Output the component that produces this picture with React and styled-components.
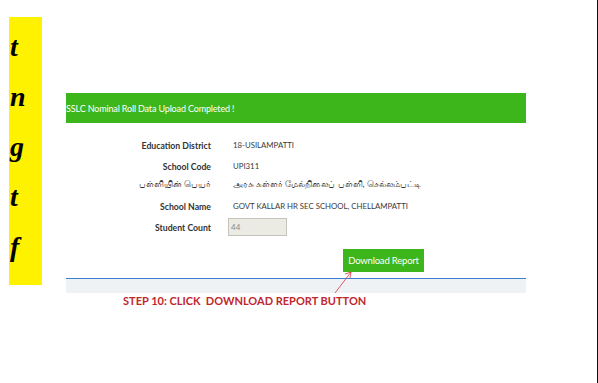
import styled, { createGlobalStyle } from "styled-components";

const GlobalStyle = createGlobalStyle`
  html, body {
    margin: 0;
    padding: 0;
    background: #ffffff;
  }
`;

const Page = styled.div`
  display: flex;
  width: 598px;
  height: 383px;
  box-sizing: border-box;
  border-right: 1px solid #111;
  overflow: hidden;
  font-family: "Lato", "Open Sans", "Liberation Sans", sans-serif;
`;

const SideStrip = styled.div`
  display: flex;
  flex-direction: column;
  gap: 18px;
  width: 33px;
  height: 268px;
  margin: 17px 0 0 9px;
  padding: 14px 0 0 1px;
  box-sizing: border-box;
  background: #fff200;
`;

const StripLetter = styled.span`
  font-family: "Liberation Serif", "DejaVu Serif", serif;
  font-weight: 700;
  font-style: italic;
  font-size: 28px;
  line-height: 32px;
  color: #000;
`;

const Main = styled.div`
  position: relative;
  width: 460px;
  margin: 93px 0 0 24px;
`;

const Banner = styled.div`
  display: flex;
  align-items: center;
  height: 30px;
  background: #3db61b;
  color: #fff;
  font-size: 9px;
  letter-spacing: -0.15px;
  white-space: nowrap;
  overflow: hidden;
`;

const Form = styled.div`
  display: flex;
  flex-direction: column;
  margin-top: 13px;
`;

const Row = styled.div`
  display: grid;
  grid-template-columns: 145px 1fr;
  column-gap: ${(p) => (p.$input ? "17px" : "22px")};
  align-items: center;
  height: 18px;
  margin-top: ${(p) => p.$top || 0}px;
`;

const Label = styled.div`
  text-align: right;
  font-size: ${(p) => (p.$tamil ? "8.5px" : "8.7px")};
  font-weight: ${(p) => (p.$tamil ? 400 : 700)};
  color: #333;
  white-space: nowrap;
`;

const Value = styled.div`
  font-size: ${(p) => (p.$tamil ? "8.5px" : "7.8px")};
  color: #3a3a3a;
  white-space: nowrap;
`;

const CountBox = styled.div`
  width: 59px;
  height: 18px;
  box-sizing: border-box;
  padding-left: 2px;
  border: 1px solid #c4c4bc;
  background: #ebebe4;
  color: #8a8a8a;
  font-size: 8px;
  line-height: 16px;
`;

const DownloadButton = styled.button`
  display: block;
  width: 81px;
  height: 23px;
  margin: 13px 0 0 277px;
  padding: 0;
  border: none;
  background: #3db61b;
  color: #fff;
  font-family: "Lato", "Open Sans", "Liberation Sans", sans-serif;
  font-size: 9.5px;
  letter-spacing: -0.2px;
`;

const Footer = styled.div`
  height: 14px;
  margin-top: 6px;
  border-top: 1px solid #3b7fd0;
  background: #eff2f5;
`;

const StepNote = styled.div`
  margin: 1px 0 0 57px;
  font-family: "Lato", "Liberation Sans", sans-serif;
  font-weight: 700;
  font-size: 11px;
  line-height: 14px;
  color: #c0272d;
  white-space: pre;
`;

const Arrow = styled.svg`
  position: absolute;
  left: 266px;
  top: 176px;
  overflow: visible;
`;

const rows = [
  { label: "Education District", value: "18-USILAMPATTI", top: 0 },
  { label: "School Code", value: "UPI311", top: 3 },
  {
    label: "பள்ளியின் பெயர்",
    value: "அரசு கள்ளர் மேல்நிலைப் பள்ளி, செல்லம்பட்டி",
    top: 0,
    tamil: true,
  },
  { label: "School Name", value: "GOVT KALLAR HR SEC SCHOOL, CHELLAMPATTI", top: 4 },
];

function App() {
  return (
    <>
      <GlobalStyle />
      <Page>
        <SideStrip>
          {["t", "n", "g", "t", "f"].map((ch, i) => (
            <StripLetter key={i}>{ch}</StripLetter>
          ))}
        </SideStrip>
        <Main>
          <Banner>SSLC Nominal Roll Data Upload Completed !</Banner>
          <Form>
            {rows.map((r) => (
              <Row key={r.label} $top={r.top}>
                <Label $tamil={r.tamil}>{r.label}</Label>
                <Value $tamil={r.tamil}>{r.value}</Value>
              </Row>
            ))}
            <Row $top={3} $input>
              <Label>Student Count</Label>
              <CountBox>44</CountBox>
            </Row>
          </Form>
          <DownloadButton>Download Report</DownloadButton>
          <Footer />
          <StepNote>{"STEP 10: CLICK  DOWNLOAD REPORT BUTTON"}</StepNote>
          <Arrow width="20" height="24" viewBox="0 0 20 24">
            <line x1="3" y1="24" x2="19" y2="3" stroke="#d6333a" strokeWidth="0.8" />
            <path d="M13 5 L19 3 L18 9" fill="none" stroke="#d6333a" strokeWidth="0.8" />
          </Arrow>
        </Main>
      </Page>
    </>
  );
}

export default App;
